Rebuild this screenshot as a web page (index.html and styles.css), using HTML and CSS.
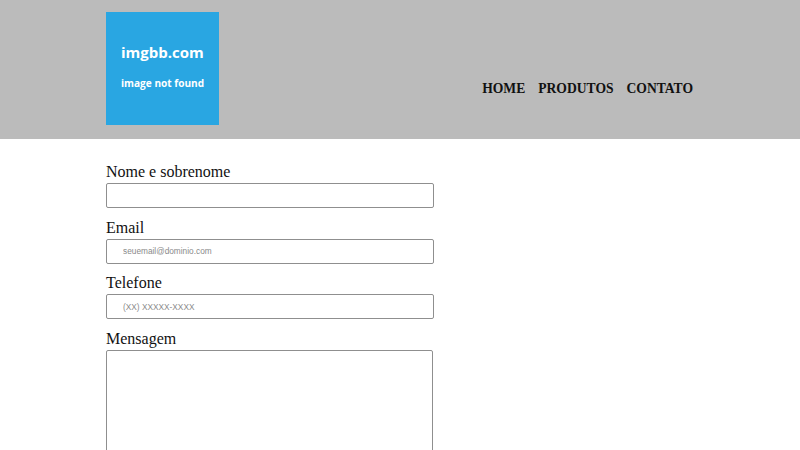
FILE: index.html
```html
<!DOCTYPE html>
<html lang="pt-BR">
<head>
<meta charset="utf-8">
<title>Contato</title>
<link rel="stylesheet" href="styles.css">
</head>
<body>
<header class="topo">
  <div class="container topo-inner">
    <div class="logo">
      <span class="logo-title">imgbb.com</span>
      <span class="logo-sub">image not found</span>
    </div>
    <nav class="menu">
      <a href="#">HOME</a>
      <a href="#">PRODUTOS</a>
      <a href="#">CONTATO</a>
    </nav>
  </div>
</header>
<main class="container">
  <form class="form">
    <div class="campo">
      <label for="nome">Nome e sobrenome</label>
      <input id="nome" type="text">
    </div>
    <div class="campo">
      <label for="email">Email</label>
      <input id="email" type="email" placeholder="seuemail@dominio.com">
    </div>
    <div class="campo">
      <label for="tel">Telefone</label>
      <input id="tel" type="tel" placeholder="(XX) XXXXX-XXXX">
    </div>
    <div class="campo">
      <label for="msg">Mensagem</label>
      <textarea id="msg"></textarea>
    </div>
  </form>
</main>
</body>
</html>
```
FILE: styles.css
```css
html, body {
  margin: 0;
  padding: 0;
  background: #ffffff;
}
body {
  font-family: "Liberation Serif", "Times New Roman", serif;
  color: #111;
}
.container {
  width: 588px;
  margin: 0 auto;
}
.topo {
  background: #bbbbbb;
  height: 139px;
}
.topo-inner {
  display: flex;
  justify-content: space-between;
  align-items: flex-start;
  padding-top: 12px;
}
.logo {
  width: 113px;
  height: 113px;
  background: #29a6e2;
  color: #ffffff;
  font-family: "Open Sans", sans-serif;
  font-weight: 700;
  display: flex;
  flex-direction: column;
  padding-left: 15px;
  box-sizing: border-box;
}
.logo-title {
  font-size: 15px;
  margin-top: 29px;
  line-height: 22px;
}
.logo-sub {
  font-size: 10.1px;
  margin-top: 12px;
  line-height: 16px;
}
.menu {
  display: flex;
  gap: 13px;
  margin-top: 68px;
  margin-right: 1px;
}
.menu a {
  color: #111;
  text-decoration: none;
  font-weight: 700;
  font-size: 13.6px;
  line-height: 18px;
}
.form {
  width: 328px;
  padding-top: 24px;
}
.campo label {
  display: block;
  font-size: 16px;
  line-height: 17px;
  margin-bottom: 3px;
}
.campo input {
  display: block;
  width: 100%;
  height: 25px;
  box-sizing: border-box;
  border: 1px solid #8f8f8f;
  border-radius: 2px;
  padding: 0 0 0 16px;
  margin: 0 0 10.67px 0;
  font-family: "Liberation Sans", Arial, sans-serif;
  font-size: 8.3px;
  background: #fff;
}
.campo input::placeholder {
  color: #8a8a8a;
}
.campo textarea {
  display: block;
  width: 327px;
  height: 140px;
  box-sizing: border-box;
  border: 1px solid #8f8f8f;
  border-radius: 2px;
  margin: 0;
  resize: vertical;
}
```
